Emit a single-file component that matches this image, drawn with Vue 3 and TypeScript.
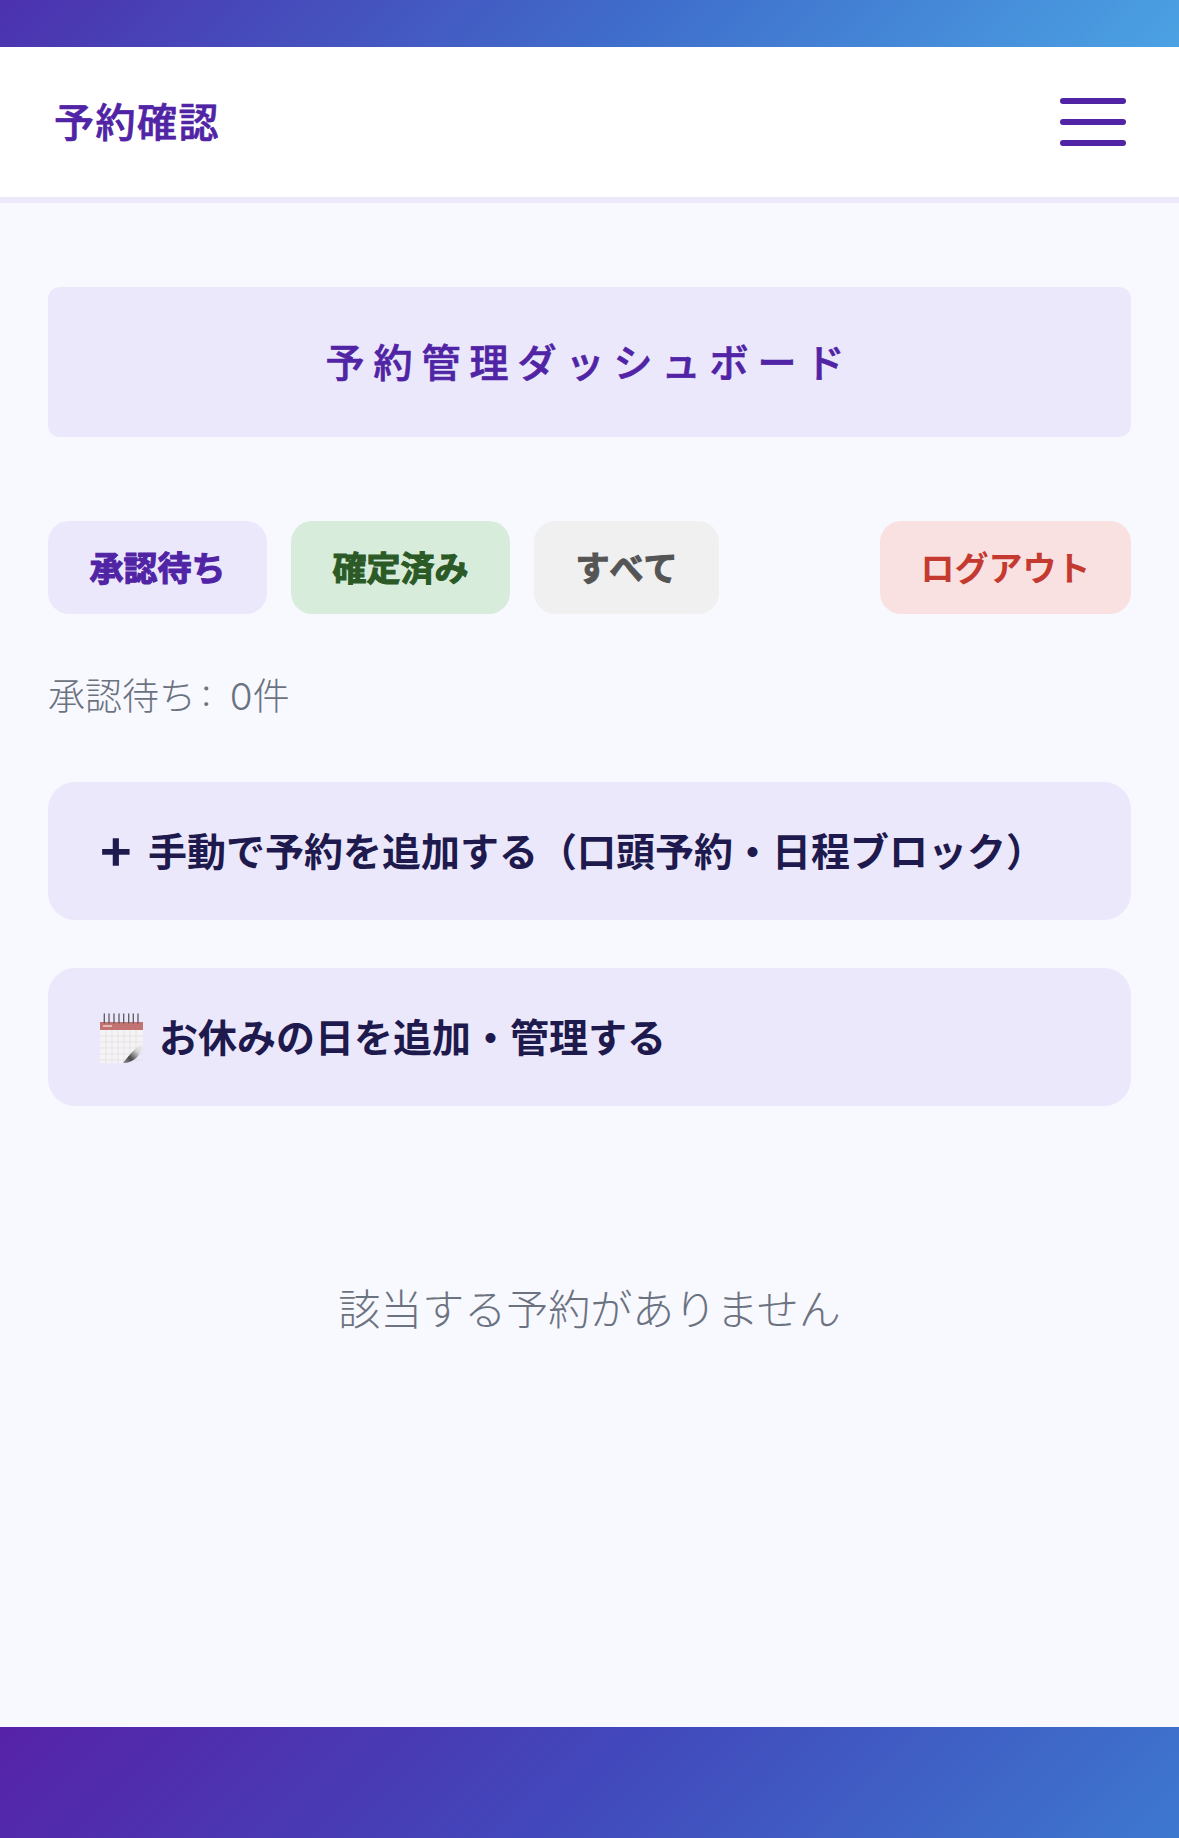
<script setup lang="ts">
const tabs = [
  { label: '承認待ち', cls: 'pending' },
  { label: '確定済み', cls: 'confirmed' },
  { label: 'すべて', cls: 'all' },
]
const gridX = [6, 12, 18, 24, 30, 36]
const gridY = [23, 29, 35, 41, 47]
const rings = [4.3, 9, 14, 19, 23.7, 28.7, 33.3, 38]
</script>

<template>
  <div class="page">
    <div class="topbar"></div>
    <header class="header">
      <h1 class="title">予約確認</h1>
      <button class="menu" aria-label="menu"><span></span><span></span><span></span></button>
    </header>
    <main class="main">
      <div class="banner">予約管理ダッシュボード</div>
      <div class="tabs">
        <button v-for="t in tabs" :key="t.cls" class="tab" :class="t.cls">{{ t.label }}</button>
        <button class="tab logout">ログアウト</button>
      </div>
      <p class="count">承認待ち<span class="sep">: </span>0件</p>
      <button class="action"><span class="plus">+</span><span class="label">手動で予約を追加する（口頭予約・日程ブロック）</span></button>
      <button class="action second">
        <svg class="cal" viewBox="0 0 43 50" width="43" height="50">
          <defs>
            <linearGradient id="curl" x1="1" y1="0" x2="0" y2="1">
              <stop offset="0" stop-color="#f7f7f7" />
              <stop offset="0.35" stop-color="#d6d5d5" />
              <stop offset="0.7" stop-color="#49484a" />
              <stop offset="1" stop-color="#8f8e90" />
            </linearGradient>
          </defs>
          <path d="M0 9H43V30C40 40 34 47 24 50H0Z" fill="#f5f3f4" />
          <g stroke="#e0dee3" stroke-width="0.7">
            <line v-for="x in gridX" :key="x" :x1="x" y1="17" :x2="x" y2="50" />
            <line v-for="y in gridY" :key="y" x1="0" :y1="y" x2="43" :y2="y" />
          </g>
          <rect x="0" y="9" width="43" height="8" fill="#c17271" />
          <rect x="3" y="12" width="9" height="2" fill="#e3b9b6" />
          <g stroke="#5d5860" stroke-width="1.3" stroke-linecap="round">
            <line v-for="x in rings" :key="x" :x1="x" y1="1" :x2="x" y2="10" />
          </g>
          <path d="M43 30C37 33 30 41 23 50C34 50 42 42 43 30Z" fill="url(#curl)" />
        </svg>
        <span class="label">お休みの日を追加・管理する</span>
      </button>
      <p class="empty">該当する予約がありません</p>
    </main>
    <footer class="footer"></footer>
  </div>
</template>

<style>
html, body { margin: 0; }
</style>

<style scoped>
.page {
  width: 1179px;
  height: 1838px;
  display: flex;
  flex-direction: column;
  background: #f8f8ff;
  font-family: "Noto Sans CJK JP", "Noto Sans", sans-serif;
  overflow: hidden;
}
.topbar {
  height: 47px;
  flex: none;
  background: linear-gradient(135deg, #4c31ae 0%, #3f6fcc 55%, #4ba2e3 100%);
}
.header {
  height: 150px;
  flex: none;
  border-bottom: 6px solid #ede9fb;
  background: #fff;
  display: flex;
  align-items: center;
  justify-content: space-between;
  padding: 0 53px 0 54px;
}
.title {
  margin: 0 0 5px;
  font-size: 40px;
  letter-spacing: 1.5px;
  font-weight: 500;
  -webkit-text-stroke: 0.7px #5024a5;
  color: #5024a5;
  line-height: 1;
}
.menu {
  width: 66px;
  padding: 0;
  border: 0;
  background: none;
  display: flex;
  flex-direction: column;
  gap: 15px;
}
.menu span {
  display: block;
  height: 6px;
  border-radius: 3px;
  background: #5024a5;
}
.main {
  flex: 1;
  padding: 84px 48px 0;
  display: flex;
  flex-direction: column;
}
.banner {
  height: 145px;
  padding-bottom: 5px;
  display: flex;
  align-items: center;
  justify-content: center;
  border-radius: 12px;
  background: #ece8fc;
  color: #5024a5;
  font-size: 39px;
  font-weight: 500;
  -webkit-text-stroke: 0.7px #5024a5;
  letter-spacing: 9px;
}
.tabs {
  display: flex;
  gap: 24px;
  margin-top: 84px;
}
.tab {
  height: 93px;
  padding: 0 41.5px 3px;
  border: 0;
  border-radius: 21px;
  font: 700 34px "Noto Sans CJK JP", sans-serif;
  font-kerning: none;
}
.pending { background: #ece8fc; color: #5024a5; -webkit-text-stroke: 1.1px #5024a5; }
.confirmed { background: #d8ecdc; color: #2b5a27; -webkit-text-stroke: 1.1px #2b5a27; }
.all { background: #f0f0f0; color: #555; -webkit-text-stroke: 1.1px #555; }
.logout { margin-left: auto; padding: 0 40.5px 3px; background: #f9e1e1; color: #c43a30; }
.count {
  margin: 62px 0 0;
  font-family: Inter, "Noto Sans CJK JP", sans-serif;
  font-size: 37px;
  font-weight: 300;
  line-height: 42px;
  word-spacing: 8px;
  color: #6b7280;
}
.sep { margin-left: 5px; }
.action {
  height: 138px;
  margin-top: 64px;
  padding: 0 52px;
  border: 0;
  border-radius: 27px;
  background: #ece8fc;
  color: #1e1a4d;
  font: 700 39px "Noto Sans CJK JP", sans-serif;
  text-align: left;
  display: flex;
  align-items: center;
}
.label { padding-bottom: 5px; }
.plus {
  flex: none;
  width: 51px;
  margin-left: -3px;
  padding-bottom: 6px;
  font: 600 56px/1 Inter, sans-serif;
}
.second { margin-top: 48px; gap: 16px; }
.cal { flex: none; margin-top: 2px; filter: blur(0.3px); }
.empty {
  margin: 176px 0 0;
  text-align: center;
  font-size: 42px;
  font-weight: 300;
  line-height: 50px;
  color: #6b7280;
}
.footer {
  height: 111px;
  flex: none;
  background: linear-gradient(135deg, #5622a8 0%, #4248bb 50%, #3d78cf 100%);
}
</style>
